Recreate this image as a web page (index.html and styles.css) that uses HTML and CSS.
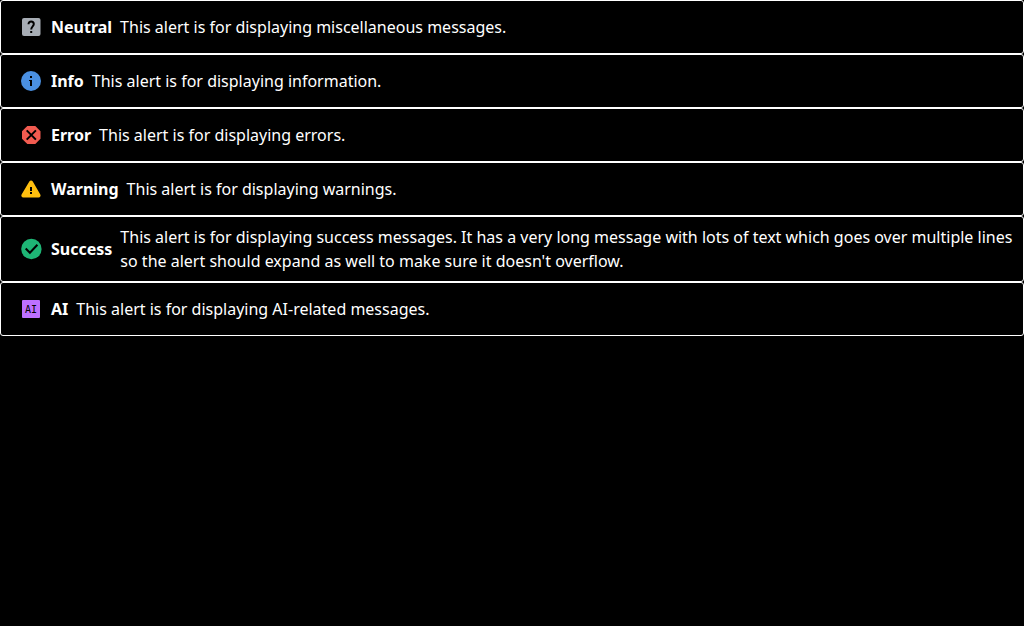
FILE: index.html
```html
<!DOCTYPE html>
<html lang="en">
<head>
<meta charset="utf-8">
<title>Alerts</title>
<link rel="stylesheet" href="styles.css">
</head>
<body>
<main class="alerts">
  <div class="alert" role="status">
    <svg class="icon neutral" viewBox="0 0 24 24" aria-hidden="true"><rect x="3" y="3" width="18.500" height="18" rx="2"/><path class="mark" d="M9.500 9.200C9.500 7.500 10.600 6.600 12.100 6.600S14.800 7.500 14.800 9.100C14.800 11.300 12.200 11.500 12.200 14.500" stroke-width="2"/><rect class="hole" x="11.200" y="16" width="2" height="2"/></svg>
    <strong class="title">Neutral</strong>
    <span class="message">This alert is for displaying miscellaneous messages.</span>
  </div>
  <div class="alert" role="status">
    <svg class="icon info" viewBox="0 0 24 24" aria-hidden="true"><circle cx="12" cy="12" r="10"/><path class="hole" d="M11 7h2v2h-2zM10 11h3v6h-2v-5h-1z"/></svg>
    <strong class="title">Info</strong>
    <span class="message">This alert is for displaying information.</span>
  </div>
  <div class="alert" role="alert">
    <svg class="icon error" viewBox="0 0 24 24" aria-hidden="true"><path d="M8.300 3h8L21.500 8.300v7.400L16.300 21h-8L3 15.700V8.300z"/><path class="mark" d="M7.700 7.400l9.200 9.200M16.900 7.400L7.700 16.600" stroke-width="2"/></svg>
    <strong class="title">Error</strong>
    <span class="message">This alert is for displaying errors.</span>
  </div>
  <div class="alert" role="alert">
    <svg class="icon warning" viewBox="0 0 24 24" aria-hidden="true"><path d="M4.300 20.500c-1.500 0-2.500-1.500-1.700-2.900L10.300 4.600c.8-1.400 2.700-1.400 3.500 0l7.500 13c.8 1.400-.2 2.900-1.700 2.900z"/><path class="hole" d="M11 10h2v4h-2zM11 15h2v2h-2z"/></svg>
    <strong class="title">Warning</strong>
    <span class="message">This alert is for displaying warnings.</span>
  </div>
  <div class="alert" role="status">
    <svg class="icon success" viewBox="0 0 24 24" aria-hidden="true"><circle cx="12.400" cy="12" r="10.200"/><path class="mark" d="M6.700 11.500l4.200 4.200 7.500-8" stroke-width="2"/></svg>
    <strong class="title">Success</strong>
    <span class="message">This alert is for displaying success messages. It has a very long message with lots of text which goes over multiple lines so the alert should expand as well to make sure it doesn't overflow.</span>
  </div>
  <div class="alert" role="status">
    <svg class="icon ai" viewBox="0 0 24 24" aria-hidden="true"><rect x="3" y="3" width="18" height="18" rx="1"/><text class="icon-text" x="12" y="16">AI</text></svg>
    <strong class="title">AI</strong>
    <span class="message">This alert is for displaying AI-related messages.</span>
  </div>
</main>
</body>
</html>
```
FILE: styles.css
```css
body {
  margin: 0;
  background: #000;
  color: #fff;
  font: 16px/24px "Noto Sans", "Open Sans", sans-serif;
}

.alert {
  box-sizing: border-box;
  display: flex;
  align-items: center;
  gap: 8px;
  min-height: 54px;
  padding: 8px 8px 8px 18px;
  border: 1px solid #fff;
  border-radius: 3px;
}

.title {
  font-weight: 700;
}

.icon {
  flex: none;
  width: 24px;
  height: 24px;
  fill: currentColor;
}

.mark {
  fill: none;
  stroke: #000;
}

.hole {
  fill: #000;
}

.icon-text {
  fill: #000;
  font: 10px "DejaVu Sans Mono", monospace;
  text-anchor: middle;
}

.neutral { color: #a7adb5; }
.info { color: #4a90e2; }
.error { color: #f25b50; }
.warning { color: #ffbf0f; }
.success { color: #1eb575; }
.ai { color: #bd70ff; }
```
